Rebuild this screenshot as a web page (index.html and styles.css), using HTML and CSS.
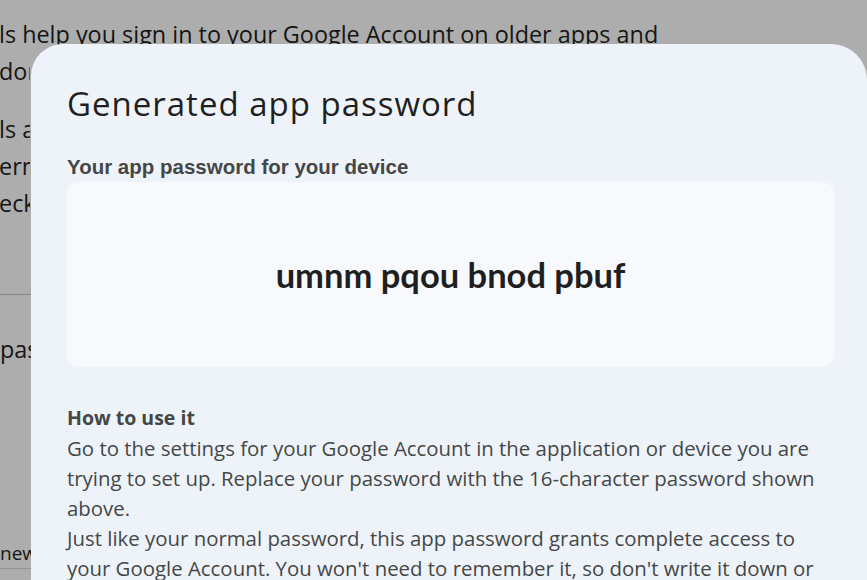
FILE: index.html
```html
<!DOCTYPE html>
<html lang="en">
<head>
<meta charset="utf-8">
<title>Generated app password</title>
<link rel="stylesheet" href="styles.css">
</head>
<body>
<div class="page">
  <section class="intro">
    <p class="line">ls help you sign in to your Google Account on older apps and</p>
    <div class="clip">
      <p class="line">don</p>
      <p class="line gap">ls a</p>
      <p class="line">ern</p>
      <p class="line">eck</p>
    </div>
  </section>
  <hr class="divider">
  <section class="list clip">
    <p class="line">pas</p>
  </section>
  <div class="bottom clip">
    <p class="line newitem">new</p>
    <hr class="divider low">
    <p class="line small">ne</p>
  </div>
</div>

<div class="scrim"></div>

<div class="dialog" role="dialog" aria-labelledby="dlg-title">
  <h1 id="dlg-title" class="title">Generated app password</h1>
  <h2 class="subhead">Your app password for your device</h2>
  <div class="codebox">
    <span class="code">umnm pqou bnod pbuf</span>
  </div>
  <h3 class="howto">How to use it</h3>
  <p class="body">Go to the settings for your Google Account in the application or device you are trying to set up. Replace your password with the 16-character password shown above.<br>Just like your normal password, this app password grants complete access to your Google Account. You won't need to remember it, so don't write it down or share it with anyone.</p>
</div>
</body>
</html>
```

FILE: styles.css
```css
html, body {
  margin: 0;
  padding: 0;
  height: 100%;
  overflow: hidden;
}
body {
  background: #ffffff;
  font-family: "Open Sans", "Noto Sans", sans-serif;
}
.page {
  color: #1f1f1f;
  font-family: "Open Sans", "Noto Sans", sans-serif;
  font-size: 23.4px;
}
.line {
  margin: 0;
  line-height: 37px;
  white-space: nowrap;
}
.clip {
  width: 31px;
  overflow: hidden;
}
.intro {
  padding-top: 16px;
  margin-left: -1px;
}
.intro .gap {
  margin-top: 21px;
}
.divider {
  border: 0;
  border-top: 1px solid #c4c7c5;
  margin: 72px 0 0 0;
}
.list {
  padding-top: 36px;
}
.bottom {
  padding-top: 170px;
}
.newitem {
  font-size: 19px;
  line-height: 30px;
}
.divider.low {
  margin-top: 0;
  border-top-color: #d9dbdb;
}
.small {
  font-size: 19px;
  line-height: 30px;
  margin-top: 6px;
}
.scrim {
  position: fixed;
  inset: 0;
  background: rgba(0, 0, 0, 0.32);
}
.dialog {
  position: fixed;
  left: 31px;
  top: 44px;
  width: 836px;
  bottom: -60px;
  box-sizing: border-box;
  padding: 40px 33px 0 36px;
  background: #eef3fa;
  border-radius: 32px 36px 0 0;
}
.title {
  margin: 0;
  font-family: "Open Sans", "Noto Sans", sans-serif;
  font-weight: 400;
  font-size: 33px;
  letter-spacing: 1px;
  line-height: 40px;
  color: #1f1f1f;
}
.subhead {
  margin: 31px 0 0 0;
  font-family: "Liberation Sans", Arial, sans-serif;
  font-weight: 700;
  font-size: 20.5px;
  line-height: 24px;
  color: #444746;
}
.codebox {
  margin-top: 3px;
  height: 185px;
  background: #f8f9fd;
  border-radius: 12px;
  display: flex;
  align-items: center;
  justify-content: center;
}
.code {
  font-family: Lato, "Open Sans", sans-serif;
  font-weight: 700;
  font-size: 34.5px;
  color: #1f1f1f;
}
.howto {
  margin: 36px 0 0 0;
  font-family: "Open Sans", "Noto Sans", sans-serif;
  font-weight: 700;
  font-size: 19.5px;
  line-height: 30px;
  color: #444746;
}
.body {
  margin: 0;
  font-family: "Open Sans", "Noto Sans", sans-serif;
  font-size: 20.4px;
  line-height: 30px;
  color: #444746;
}
```
